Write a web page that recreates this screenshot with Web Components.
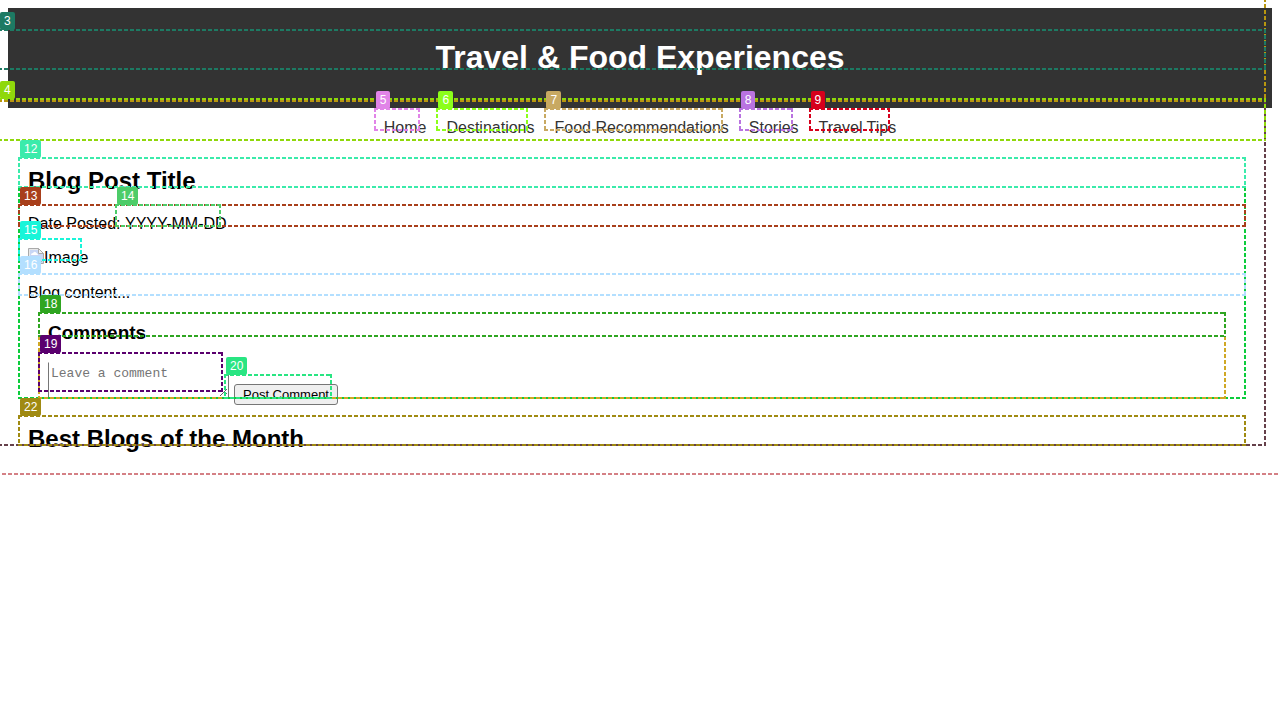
<!DOCTYPE html>
<html lang="en">
<head>
<meta charset="utf-8">
<title>Travel &amp; Food Experiences</title>
<style>
body { margin: 0; font-family: "Liberation Sans", Arial, sans-serif; font-size: 16px; line-height: 19px; background: #fff; color: #000; overflow-x: hidden; }
</style>
</head>
<body>
<travel-page></travel-page>

<template id="mark-tpl">
<style>
:host { display: block; position: relative; }
:host([inline]) { display: inline-block; }
.frame {
  position: absolute; z-index: 1; pointer-events: none;
  inset: -10px 6px 6px -10px;
  --h: linear-gradient(90deg, var(--c) 4px, transparent 4px);
  --v: linear-gradient(180deg, var(--c) 4px, transparent 4px);
  background:
    var(--h) 0 0 / 6px 2px repeat-x,
    var(--h) 0 100% / 6px 2px repeat-x,
    var(--v) 0 0 / 2px 6px repeat-y,
    var(--v) 100% 0 / 2px 6px repeat-y;
}
.tag {
  position: absolute; left: 2px; top: -17px; padding: 2px 4px;
  border-radius: 2px; background: var(--c); color: #fff;
  font: 12px/14px "Liberation Sans", Arial, sans-serif;
}
.tag:empty { display: none; }
</style>
<div class="frame"><span class="tag"></span></div>
<slot></slot>
</template>

<template id="header-tpl">
<style>
:host { display: block; background: #333; color: #fff; padding: 10px 0; text-align: center; }
h1 { margin: 0; font-size: 32px; line-height: 37px; }
mark-box { margin: 21px 0 22px; }
</style>
<mark-box n="3" color="#1d7a63"><h1><slot></slot></h1></mark-box>
</template>

<template id="nav-tpl">
<style>
:host { display: block; }
nav { display: flex; justify-content: center; gap: 20px; padding: 10px 0; }
a { color: #333; text-decoration: none; display: block; }
</style>
<nav>
<mark-box n="5" color="#e184e8"><a href="#home">Home</a></mark-box>
<mark-box n="6" color="#8cff1a"><a href="#destinations">Destinations</a></mark-box>
<mark-box n="7" color="#c8a962"><a href="#food">Food Recommendations</a></mark-box>
<mark-box n="8" color="#b973e0"><a href="#stories">Stories</a></mark-box>
<mark-box n="9" color="#d6001c"><a href="#tips">Travel Tips</a></mark-box>
</nav>
</template>

<template id="comments-tpl">
<style>
:host { display: block; }
h3 { margin: 0; font-size: 19px; line-height: 21px; }
.form { display: flex; align-items: flex-start; gap: 5px; margin-top: 19px; }
textarea {
  display: block; box-sizing: border-box; width: 181px; height: 36px; margin: 0; padding: 3px 2px 2px;
  border: 1px solid #767676; border-top-color: transparent; resize: both;
  font: 13px/15px "Liberation Mono", monospace; background: #fff;
}
textarea::placeholder { color: #757575; }
.post { margin-top: 22px; }
button {
  display: block; box-sizing: border-box; height: 21px; width: 104px; margin: 0; padding: 0 6px; white-space: nowrap;
  border: 1px solid #767676; border-radius: 3px; background: #efefef; color: #000;
  font: 13px/15px "Liberation Sans", Arial, sans-serif;
}
</style>
<mark-box n="18" color="#2fa521"><h3>Comments</h3></mark-box>
<div class="form">
<mark-box n="19" color="#5a006e"><textarea aria-label="Comment" placeholder="Leave a comment"></textarea></mark-box>
<mark-box n="20" color="#29e582" class="post"><button type="button">Post Comment</button></mark-box>
</div>
</template>

<template id="post-tpl">
<style>
:host { display: block; }
h2 { margin: 0; font-size: 24px; line-height: 27px; }
p { margin: 0; }
.date { margin-top: 20px; }
.pic { display: table; margin-top: 15px; }
.text { margin-top: 16px; }
.comments { margin: 20px 20px 0; }
.img { display: flex; height: 19px; }
svg { width: 16px; height: 16px; flex: none; }
</style>
<mark-box n="12" color="#3bebab"><h2>Blog Post Title</h2></mark-box>
<mark-box n="13" color="#a83f1b" class="date"><p>Date Posted: <mark-box inline n="14" color="#4dcc68"><time>YYYY-MM-DD</time></mark-box></p></mark-box>
<mark-box n="15" color="#19f5d9" class="pic"><div class="img">
<svg viewBox="0 0 16 16" aria-hidden="true"><path d="M.5 .5H10.500L15.500 5.500V15.500H.5Z" fill="#c8d6f5" stroke="#aaa"/><path d="M1.500 15V1.500H10" fill="none" stroke="#e8e8e8"/><path d="M3 7Q3 5 5 5Q7 2.500 9 5.500Q10 6 10 7Z" fill="#fff"/><path d="M2 14V12L7 9L14 14Z" fill="#64a844"/><path d="M10.500 .5V5.500H15.500Z" fill="#f2f2f2" stroke="#aaa"/></svg><span>Image</span></div></mark-box>
<mark-box n="16" color="#b3dfff" class="text"><p>Blog content...</p></mark-box>
<mark-box color="#d0a825" class="comments"><comment-form></comment-form></mark-box>
</template>

<template id="page-tpl">
<style>
:host { display: block; }
.page { padding: 8px 0 29px; margin-right: -12px; }
.body { margin: 0 20px 0 8px; }
.entry { margin: 20px 20px 0; }
h2 { margin: 0; font-size: 24px; line-height: 27px; }
</style>
<mark-box color="#d48085" class="page">
<mark-box color="#65404a" class="body">
<mark-box color="#b8960f"><site-header>Travel &amp; Food Experiences</site-header></mark-box>
<mark-box n="4" color="#8fd80b"><site-nav></site-nav></mark-box>
<mark-box color="#0ccc3c" class="entry"><blog-post></blog-post></mark-box>
<mark-box n="22" color="#a08a12" class="entry"><h2>Best Blogs of the Month</h2></mark-box>
</mark-box>
</mark-box>
</template>

<script>
const attach = (el, id) => {
  const root = el.attachShadow({ mode: "open" });
  root.append(document.getElementById(id).content.cloneNode(true));
  return root;
};
customElements.define("mark-box", class extends HTMLElement {
  connectedCallback() {
    if (this.shadowRoot) return;
    const root = attach(this, "mark-tpl");
    root.querySelector(".frame").style.setProperty("--c", this.getAttribute("color"));
    root.querySelector(".tag").textContent = this.getAttribute("n") || "";
  }
});
for (const [name, id] of [
  ["site-header", "header-tpl"], ["site-nav", "nav-tpl"], ["comment-form", "comments-tpl"],
  ["blog-post", "post-tpl"], ["travel-page", "page-tpl"]
]) {
  customElements.define(name, class extends HTMLElement {
    connectedCallback() { if (!this.shadowRoot) attach(this, id); }
  });
}
</script>
</body>
</html>
